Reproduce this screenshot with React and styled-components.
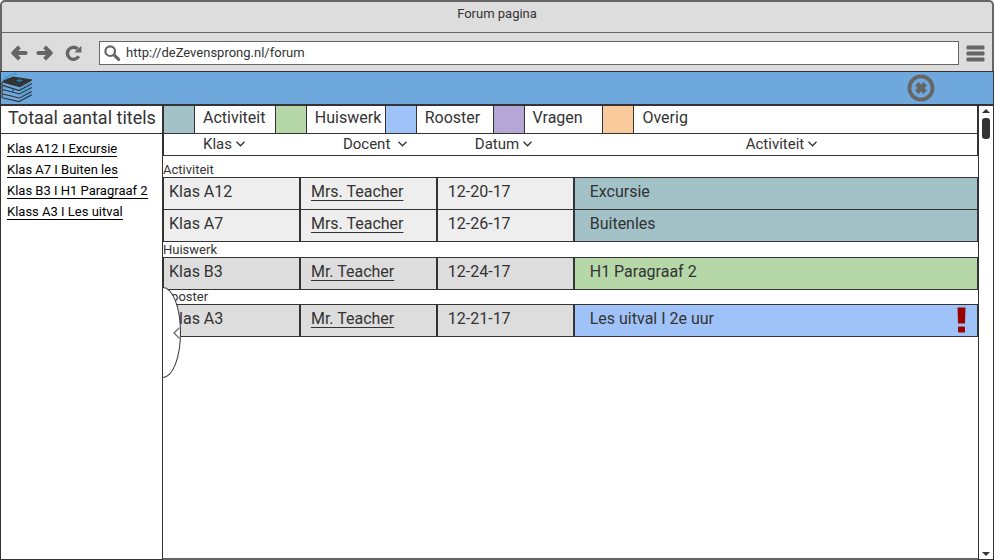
import React from "react";
import styled, { createGlobalStyle } from "styled-components";

const ink = "#333333";
const gray = "#666666";
const chrome = "#dddddd";

const subjects = {
  activiteit: "#a2c2c7",
  huiswerk: "#b6d7a8",
  rooster: "#9fc3f8",
  vragen: "#b4a7d6",
  overig: "#f9cb9c",
};

const GlobalStyle = createGlobalStyle`
  *, *::before, *::after { box-sizing: border-box; }
  body {
    margin: 0;
    background: #ffffff;
    color: ${ink};
    font: 16px/20px Roboto, "Liberation Sans", sans-serif;
  }
  button { font: inherit; color: inherit; background: none; border: 0; padding: 0; cursor: pointer; }
  svg { display: block; }
`;

const Window = styled.div`
  min-height: 100vh;
  display: flex;
  flex-direction: column;
`;

const Chrome = styled.header`
  background: ${chrome};
  border: 2px solid ${gray};
  border-bottom: 0;
  border-radius: 5px 5px 0 0;
`;

const TitleBar = styled.div`
  height: 31px;
  padding-top: 2px;
  border-bottom: 1px solid ${gray};
  text-align: center;
  font-size: 13px;
`;

const Toolbar = styled.form`
  height: 38px;
  padding: 2px 7px 0 9px;
  display: flex;
  align-items: center;
`;

const Navigation = styled.nav`
  display: flex;
  gap: 8px;
  margin-right: 17px;

  button:last-child { margin-left: 4px; }
`;

const AddressField = styled.label`
  flex: 1;
  height: 24px;
  margin-right: 7px;
  padding-left: 4px;
  display: flex;
  align-items: center;
  gap: 5px;
  background: #ffffff;
  border: 1px solid ${gray};
`;

const AddressInput = styled.input`
  flex: 1;
  min-width: 0;
  padding: 0;
  border: 0;
  outline: 0;
  background: transparent;
  color: ${ink};
  font: inherit;
  font-size: 13px;
`;

const Banner = styled.div`
  height: 35px;
  padding-right: 58px;
  display: flex;
  align-items: center;
  justify-content: space-between;
  background: #6fa8dc;
  border: 1px solid ${ink};
  border-bottom-width: 2px;
`;

const Body = styled.div`
  flex: 1;
  display: flex;
`;

const Sidebar = styled.aside`
  flex: 0 0 163px;
  border: 1px solid ${ink};
  border-top: 0;
`;

const SidebarTitle = styled.h2`
  height: 28px;
  margin: 0;
  padding-left: 7px;
  border-bottom: 1px solid ${ink};
  font-size: 18px;
  font-weight: 400;
  line-height: 24px;
  white-space: nowrap;
`;

const TopicList = styled.ul`
  margin: 0;
  padding: 7px 0 0 6px;
  display: flex;
  flex-direction: column;
  align-items: flex-start;
  gap: 5px;
  list-style: none;
`;

const TopicLink = styled.a`
  display: block;
  color: #000000;
  border-bottom: 1px solid #000000;
  font-size: 13px;
  line-height: 15px;
  text-decoration: none;
`;

const Main = styled.main`
  flex: 1;
  min-width: 0;
  position: relative;
  border-bottom: 2px solid ${gray};
`;

const Legend = styled.ul`
  height: 28px;
  margin: 0;
  padding: 0;
  display: grid;
  grid-template-columns: 112fr 110fr 108fr 110fr 375fr;
  list-style: none;
  border-right: 1px solid ${ink};
  border-bottom: 1px solid ${ink};
`;

const LegendItem = styled.li`
  display: flex;
  line-height: 24px;
`;

const Swatch = styled.span`
  flex: none;
  width: 32px;
  margin-right: 8px;
  background: ${(p) => p.$color};
  border: solid ${ink};
  border-width: 0 1px;
`;

const ForumTable = styled.table`
  width: 100%;
  table-layout: fixed;
  border-collapse: separate;
  border-spacing: 0;
`;

const Column = styled.col`
  width: ${(p) => p.$width};
`;

const HeadCell = styled.th`
  height: 22px;
  padding: 0 0 1px ${(p) => p.$indent}px;
  text-align: left;
  font-size: 15px;
  font-weight: 400;
  border-bottom: 1px solid ${ink};

  &:first-child { border-left: 1px solid ${ink}; }
  &:last-child { border-right: 1px solid ${ink}; }
`;

const SortButton = styled.button`
  display: flex;
  align-items: center;
  gap: ${(p) => (p.$wide ? 8 : 4)}px;
`;

const GroupCell = styled.th`
  height: ${(p) => p.$height}px;
  padding: 0;
  vertical-align: bottom;
  text-align: left;
  font-size: 13px;
  font-weight: 400;
  line-height: 14px;
  border-bottom: 1px solid ${ink};
`;

const Cell = styled.td`
  height: 32px;
  padding: 0 0 4px ${(p) => p.$indent}px;
  background: ${(p) => p.$color};
  border: 1px solid ${ink};
  border-top: 0;
`;

const TeacherLink = styled.a`
  color: ${ink};
  text-decoration: underline 1px;
  text-underline-offset: 3px;
  text-decoration-skip-ink: none;
`;

const Subject = styled.div`
  display: flex;
  align-items: center;
  justify-content: space-between;
  height: 20px;
  padding-right: 11px;
`;

const Alert = styled.svg`
  margin-bottom: -2px;
`;

const Drawer = styled.button`
  position: absolute;
  left: 0;
  top: 181px;
  width: 18px;
  height: 91px;
  display: flex;
  align-items: center;
  justify-content: flex-end;
  background: #ffffff;
  border: 1px solid ${ink};
  border-left: 0;
  border-radius: 0 100% 100% 0 / 0 50% 50% 0;
`;

const Scrollbar = styled.div`
  flex: 0 0 16px;
  padding: 3px 0;
  display: flex;
  flex-direction: column;
  align-items: center;
  border: 1px solid ${ink};
  border-top: 0;
`;

const Thumb = styled.div`
  width: 8px;
  height: 21px;
  margin: 5px 0 auto;
  border-radius: 3px;
  background: ${ink};
`;

const ArrowIcon = ({ flip }) => (
  <svg width="17" height="16" viewBox="0 0 17 16" fill="none" stroke={gray} strokeWidth="4" strokeLinecap="round">
    <g transform={flip ? "matrix(-1 0 0 1 17 0)" : undefined}>
      <path d="M14.6 8H4" />
      <path d="M8.4 1.8L2.4 8L8.4 14.2" strokeLinecap="butt" strokeLinejoin="round" />
    </g>
  </svg>
);

const ReloadIcon = () => (
  <svg width="17" height="16" viewBox="0 0 17 16">
    <path d="M12.6 4A6 6 0 1 0 13.7 11.2" fill="none" stroke={gray} strokeWidth="3.4" />
    <path d="M16.4 0.8V7.4H9.4Z" fill={gray} />
  </svg>
);

const SearchIcon = () => (
  <svg width="17" height="17" viewBox="0 0 17 17" fill="none" stroke={gray}>
    <circle cx="6.2" cy="6.2" r="4.8" strokeWidth="2.2" />
    <path d="M10.2 10.2L14.6 14.4" strokeWidth="3.2" strokeLinecap="round" />
  </svg>
);

const MenuIcon = () => (
  <svg width="19" height="17" viewBox="0 0 19 17" fill={gray}>
    <rect x="0.5" y="0.5" width="18" height="4" rx="1.2" />
    <rect x="0.5" y="6.5" width="18" height="4" rx="1.2" />
    <rect x="0.5" y="12.5" width="18" height="4" rx="1.2" />
  </svg>
);

const BooksLogo = () => (
  <svg width="32" height="32" viewBox="0 0 32 32" fill="none">
    <path d="M1 9L12 4.4L31.4 7.4L30.6 8.8L19 15.2L14 14L3 11Z" fill={ink} />
    <path d="M15 8.4L19 7.2L22 8.4L18 10Z" fill="#0a87c4" />
    <path d="M2 7.4L8 4.8M4 5L11 2.4M10 3L15 1.2M15 3.6V0.8" stroke="#1594d2" strokeWidth="1" strokeDasharray="2 1" />
    <path d="M12 16V20.5" stroke="#0a87c4" strokeWidth="2" />
    <path d="M2 10.2C0.4 11 0.4 12.6 1.6 13.4L18.4 18.6L31 11.6M1.6 13.6C0.4 15 0.6 17 1.6 17.6L18.4 22L31 15.4M1.6 18C0.4 19.6 0.6 21.4 1.8 22L18.4 26L31 19.6M1.8 22.4C0.6 23.6 0.6 25.4 2 26L18 29.6L31 22.8" stroke={ink} strokeWidth="1.1" />
    <path d="M19 16.8L30 10.4M20 20.4L30 14.4M20 24.4L30 18.4M21 27L30 21.8" stroke="#1594d2" strokeWidth="1" strokeDasharray="2.4 1.4" />
  </svg>
);

const CloseIcon = () => (
  <svg width="28" height="28" viewBox="0 0 28 28" fill="none" stroke={gray}>
    <circle cx="14" cy="14" r="11.6" strokeWidth="3.8" />
    <path d="M9.8 9.8L18.2 18.2M18.2 9.8L9.8 18.2" strokeWidth="4.8" />
  </svg>
);

const Chevron = () => (
  <svg width="9" height="6" viewBox="0 0 9 6" fill="none" stroke={ink} strokeWidth="1.3">
    <path d="M0.5 0.8L4.5 4.8L8.5 0.8" />
  </svg>
);

const DrawerArrow = () => (
  <svg width="7" height="12" viewBox="0 0 7 12" fill="none" stroke={gray} strokeWidth="1.3">
    <path d="M6.4 0.6L1 6L6.4 11.4" />
  </svg>
);

const ScrollArrow = ({ down }) => (
  <svg width="8" height="4" viewBox="0 0 8 4" fill={ink}>
    <path d={down ? "M0 0H8L4 4Z" : "M0 4H8L4 0Z"} />
  </svg>
);

const topics = ["Klas A12 I Excursie", "Klas A7 I Buiten les", "Klas B3 I H1 Paragraaf 2", "Klass A3 I Les uitval"];

const legend = [
  ["Activiteit", subjects.activiteit],
  ["Huiswerk", subjects.huiswerk],
  ["Rooster", subjects.rooster],
  ["Vragen", subjects.vragen],
  ["Overig", subjects.overig],
];

const columns = [
  { name: "Klas", width: "16.8%", indent: 39 },
  { name: "Docent", width: "16.8%", indent: 43, wide: true },
  { name: "Datum", width: "16.8%", indent: 38 },
  { name: "Activiteit", width: "auto", indent: 172 },
];

const groups = [
  {
    name: "Activiteit",
    height: 22,
    color: subjects.activiteit,
    shade: "#eeeeee",
    rows: [
      ["Klas A12", "Mrs. Teacher", "12-20-17", "Excursie"],
      ["Klas A7", "Mrs. Teacher", "12-26-17", "Buitenles"],
    ],
  },
  {
    name: "Huiswerk",
    height: 16,
    color: subjects.huiswerk,
    shade: "#dddddd",
    rows: [["Klas B3", "Mr. Teacher", "12-24-17", "H1 Paragraaf 2"]],
  },
  {
    name: "Rooster",
    height: 15,
    color: subjects.rooster,
    shade: "#dddddd",
    urgent: true,
    rows: [["Klas A3", "Mr. Teacher", "12-21-17", "Les uitval I 2e uur"]],
  },
];

export default function App() {
  return (
    <Window>
      <GlobalStyle />
      <Chrome>
        <TitleBar>Forum pagina</TitleBar>
        <Toolbar onSubmit={(e) => e.preventDefault()}>
          <Navigation>
            <button type="button" aria-label="Terug"><ArrowIcon /></button>
            <button type="button" aria-label="Vooruit"><ArrowIcon flip /></button>
            <button type="button" aria-label="Vernieuwen"><ReloadIcon /></button>
          </Navigation>
          <AddressField>
            <SearchIcon />
            <AddressInput aria-label="Adres" defaultValue="http://deZevensprong.nl/forum" />
          </AddressField>
          <button type="button" aria-label="Menu"><MenuIcon /></button>
        </Toolbar>
      </Chrome>

      <Banner>
        <BooksLogo />
        <button type="button" aria-label="Sluiten"><CloseIcon /></button>
      </Banner>

      <Body>
        <Sidebar>
          <SidebarTitle>Totaal aantal titels</SidebarTitle>
          <TopicList>
            {topics.map((topic) => (
              <li key={topic}><TopicLink href="#">{topic}</TopicLink></li>
            ))}
          </TopicList>
        </Sidebar>

        <Main>
          <Legend>
            {legend.map(([name, color]) => (
              <LegendItem key={name}><Swatch $color={color} />{name}</LegendItem>
            ))}
          </Legend>

          <ForumTable>
            <colgroup>
              {columns.map((c) => <Column key={c.name} $width={c.width} />)}
            </colgroup>
            <thead>
              <tr>
                {columns.map((c) => (
                  <HeadCell key={c.name} scope="col" $indent={c.indent}>
                    <SortButton type="button" $wide={c.wide}>{c.name}<Chevron /></SortButton>
                  </HeadCell>
                ))}
              </tr>
            </thead>
            {groups.map((group) => (
              <tbody key={group.name}>
                <tr><GroupCell colSpan={4} scope="rowgroup" $height={group.height}>{group.name}</GroupCell></tr>
                {group.rows.map(([klas, teacher, date, title]) => (
                  <tr key={klas}>
                    <Cell $indent={5} $color={group.shade}>{klas}</Cell>
                    <Cell $indent={10} $color={group.shade}><TeacherLink href="#">{teacher}</TeacherLink></Cell>
                    <Cell $indent={10} $color={group.shade}>{date}</Cell>
                    <Cell $indent={15} $color={group.color}>
                      <Subject>
                        {title}
                        {group.urgent && (
                          <Alert width="9" height="26" viewBox="0 0 9 26" fill="#990000" role="img" aria-label="Belangrijk">
                            <path d="M0.5 0.5H8.5L8 16.5H1Z" />
                            <rect x="1" y="19.5" width="7" height="6" rx="1" />
                          </Alert>
                        )}
                      </Subject>
                    </Cell>
                  </tr>
                ))}
              </tbody>
            ))}
          </ForumTable>

          <Drawer type="button" aria-label="Zijbalk inklappen"><DrawerArrow /></Drawer>
        </Main>

        <Scrollbar>
          <button type="button" aria-label="Omhoog"><ScrollArrow /></button>
          <Thumb />
          <button type="button" aria-label="Omlaag"><ScrollArrow down /></button>
        </Scrollbar>
      </Body>
    </Window>
  );
}
